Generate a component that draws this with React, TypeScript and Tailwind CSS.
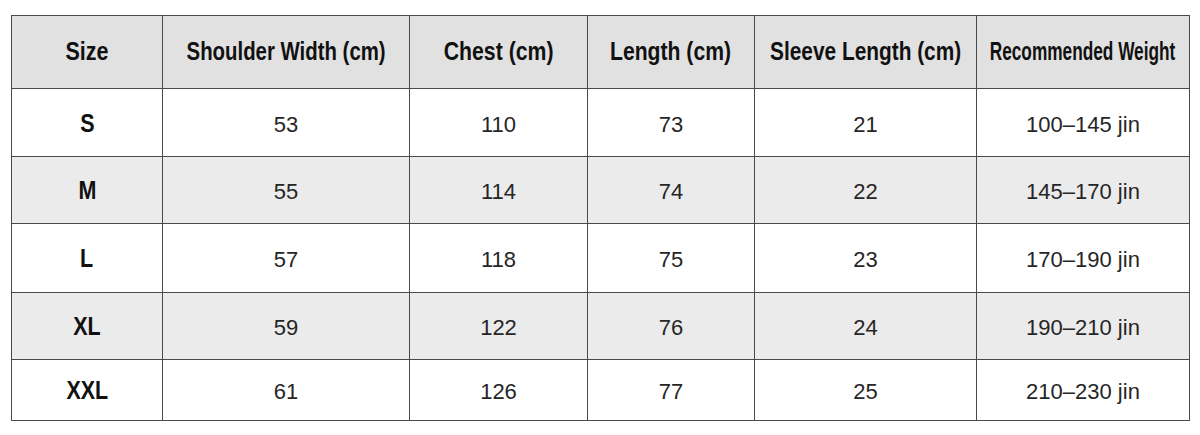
const headers = [
  { label: "Size", scale: "scale-x-[0.86]" },
  { label: "Shoulder Width (cm)", scale: "scale-x-[0.815]" },
  { label: "Chest (cm)", scale: "scale-x-[0.85]" },
  { label: "Length (cm)", scale: "scale-x-[0.846]" },
  { label: "Sleeve Length (cm)", scale: "scale-x-[0.834]" },
  { label: "Recommended Weight", scale: "scale-x-[0.69]" },
];

const rows = [
  { size: "S", vals: ["53", "110", "73", "21", "100–145 jin"], h: "h-[68px]", bg: "bg-white" },
  { size: "M", vals: ["55", "114", "74", "22", "145–170 jin"], h: "h-[67px]", bg: "bg-[#ebebeb]" },
  { size: "L", vals: ["57", "118", "75", "23", "170–190 jin"], h: "h-[69px]", bg: "bg-white" },
  { size: "XL", vals: ["59", "122", "76", "24", "190–210 jin"], h: "h-[67px]", bg: "bg-[#ebebeb]" },
  { size: "XXL", vals: ["61", "126", "77", "25", "210–230 jin"], h: "h-[61px]", bg: "bg-white" },
];

const colWidths = ["w-[151px]", "w-[247px]", "w-[178px]", "w-[167px]", "w-[222px]", "w-[213px]"];

const cell = "border-[1.5px] border-[#4a4a4a] p-0 text-center align-middle";
const boldFont = "font-bold text-[25px] text-[#111] font-['Liberation_Sans',Arial,sans-serif]";

export default function App() {
  return (
    <div className="w-[1200px] h-[435px] bg-white pt-[15px] pl-[11px]">
      <table className="table-fixed border-collapse w-[1178px] border-[1.5px] border-[#4a4a4a]">
        <colgroup>
          {colWidths.map((w, i) => (
            <col key={i} className={w} />
          ))}
        </colgroup>
        <thead>
          <tr className="h-[73px] bg-[#e1e1e1]">
            {headers.map((h) => (
              <th key={h.label} className={`${cell} ${boldFont}`}>
                <div className="flex justify-center">
                  <span className={`inline-block shrink-0 whitespace-nowrap ${h.scale}`}>{h.label}</span>
                </div>
              </th>
            ))}
          </tr>
        </thead>
        <tbody>
          {rows.map((r) => (
            <tr key={r.size} className={`${r.h} ${r.bg}`}>
              <td className={`${cell} ${boldFont}`}>
                <span className="inline-block scale-x-[0.86] pt-[2px]">{r.size}</span>
              </td>
              {r.vals.map((v, i) => (
                <td
                  key={i}
                  className={`${cell} pt-[3px] text-[22px] text-[#262626] font-['Liberation_Sans',Arial,sans-serif]`}
                >
                  {v}
                </td>
              ))}
            </tr>
          ))}
        </tbody>
      </table>
    </div>
  );
}
